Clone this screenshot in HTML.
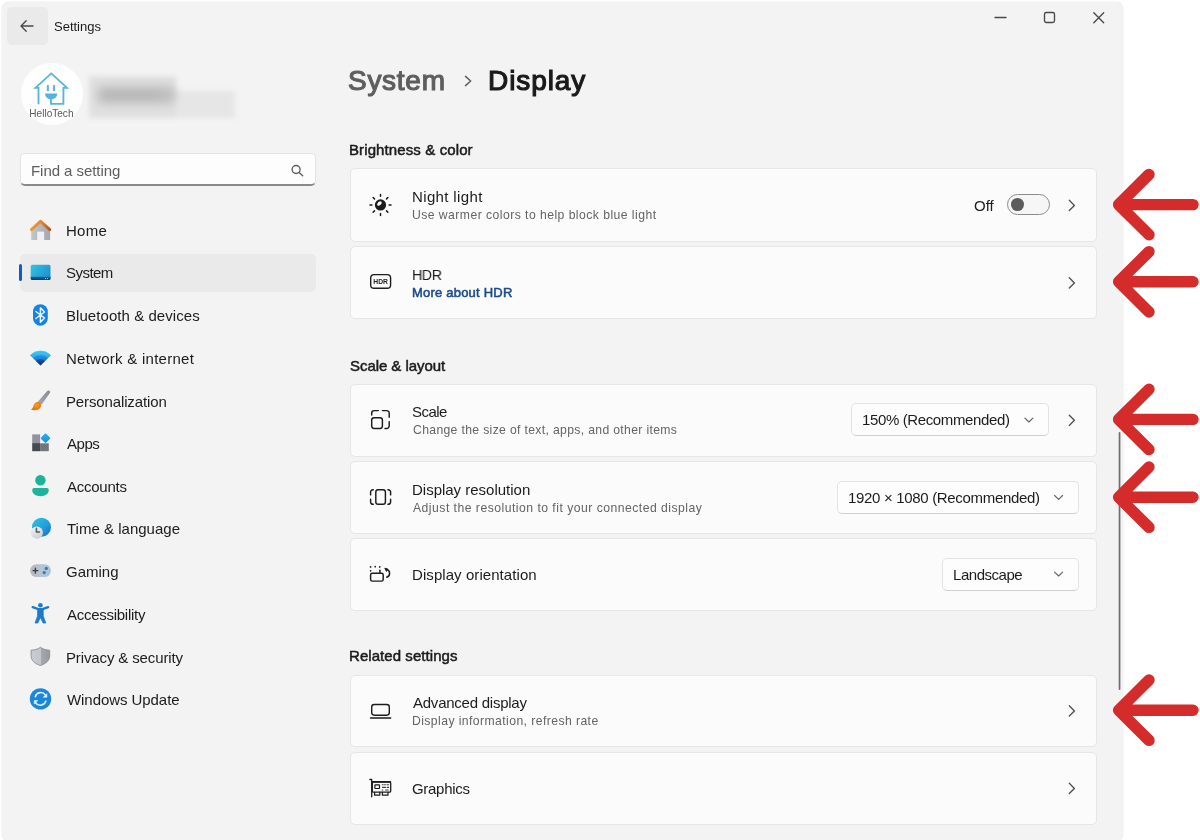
<!DOCTYPE html>
<html>
<head>
<meta charset="utf-8">
<title>Settings</title>
<style>
*{box-sizing:border-box;margin:0;padding:0}
html,body{width:1200px;height:840px;overflow:hidden;background:#fff}
body{font-family:"Liberation Sans",sans-serif;color:#1b1b1b;position:relative}
.win{position:absolute;left:2px;top:2px;width:1121px;height:838.5px;background:#f3f3f3;border-radius:7px;box-shadow:0 0 1.5px rgba(0,0,0,.16)}
.abs{position:absolute}
.t{position:absolute;white-space:nowrap;line-height:1;will-change:transform}
svg{will-change:transform}
.back{left:6.5px;top:7px;width:41px;height:37.5px;background:#eaeaea;border-radius:5px}
.search{left:20px;top:153px;width:296px;height:33px;background:#fdfdfd;border:1px solid #e3e3e3;border-bottom:2px solid #8a8a8a;border-radius:5px}
.sel{left:20px;top:254px;width:296px;height:38px;background:#eaeaea;border-radius:5px}
.selbar{left:19px;top:264px;width:3px;height:17px;background:#0f5fb8;border-radius:2px}
.nav{font-size:15px;left:66px;color:#1c1c1c}
.card{position:absolute;left:350px;width:747px;background:#fbfbfb;border:1px solid #e6e6e6;border-radius:5px}
.h{font-size:15px;left:349px;color:#1b1b1b;-webkit-text-stroke:0.5px #1b1b1b}
.ct{font-size:15px;left:413px;color:#1c1c1c}
.cs{font-size:12.2px;left:413px;color:#646464}
.dd{position:absolute;background:#fdfdfd;border:1px solid #e3e3e3;border-bottom-color:#cfcfcf;border-radius:5px;height:33px}
</style>
</head>
<body>
<div class="win"></div>

<!-- title bar -->
<div class="abs back"></div>
<div class="t" style="left:54px;top:20px;font-size:13px;letter-spacing:0.0px">Settings</div>

<!-- avatar -->
<div class="abs" style="left:20.8px;top:63.3px;width:62px;height:62px;border-radius:50%;background:#fefefe"></div>
<svg class="abs" style="left:0;top:0" width="260" height="140" viewBox="0 0 260 140" fill="none">
 <defs><filter id="bl" x="-20%" y="-40%" width="140%" height="180%"><feGaussianBlur stdDeviation="5"/></filter>
 <filter id="bl2" x="-20%" y="-40%" width="140%" height="180%"><feGaussianBlur stdDeviation="2.800"/></filter></defs>
 <g filter="url(#bl2)"><rect x="89" y="76" width="87" height="42" fill="#e0e0e0"/><rect x="176" y="91" width="59" height="27" fill="#e6e6e6"/></g>
 <g filter="url(#bl)">
  <rect x="97" y="86" width="78" height="18" rx="5" fill="#c0c0c0"/>
  <rect x="104" y="91" width="56" height="8" rx="4" fill="#b6b6b6"/>
 </g>
 <g stroke="#58b6da" stroke-width="1.850" stroke-linejoin="miter" stroke-linecap="butt">
  <path d="M38.500 104.300V87.800H35.500L51.300 73.400L67 87.800H63.400V103.800H50.900V99"/>
 </g>
 <path d="M45.100 93.400h12.100v.6a6 5.300 0 0 1-12.100 0z" fill="#52b4da"/>
 <rect x="46.800" y="85" width="2.100" height="5.900" rx=".5" fill="#5cb8db"/>
 <rect x="53" y="85" width="2.100" height="5.900" rx=".5" fill="#5cb8db"/>
 <text x="29.300" y="116.600" font-family="Liberation Sans, sans-serif" font-size="10.900" fill="#5a5a5e" textLength="44.200" lengthAdjust="spacingAndGlyphs">HelloTech</text>
</svg>

<!-- search -->
<div class="abs search"></div>
<div class="t" style="left:31px;top:163px;font-size:15px;color:#5d5d5d;letter-spacing:-0.05px">Find a setting</div>

<!-- nav -->
<div class="abs sel"></div>
<div class="abs selbar"></div>
<div class="t nav" style="top:223px;left:66px;letter-spacing:0.24px">Home</div>
<div class="t nav" style="top:265px;left:66px;letter-spacing:-0.54px">System</div>
<div class="t nav" style="top:308px;left:66px;letter-spacing:0.06px">Bluetooth &amp; devices</div>
<div class="t nav" style="top:351px;left:66px;letter-spacing:0.26px">Network &amp; internet</div>
<div class="t nav" style="top:394px;left:66px;letter-spacing:-0.13px">Personalization</div>
<div class="t nav" style="top:436px;left:67px;letter-spacing:-0.48px">Apps</div>
<div class="t nav" style="top:479px;left:67px;letter-spacing:-0.25px">Accounts</div>
<div class="t nav" style="top:521px;left:67px;letter-spacing:0.01px">Time &amp; language</div>
<div class="t nav" style="top:564px;left:66px;letter-spacing:0.0px">Gaming</div>
<div class="t nav" style="top:607px;left:67px;letter-spacing:-0.27px">Accessibility</div>
<div class="t nav" style="top:650px;left:66px;letter-spacing:-0.13px">Privacy &amp; security</div>
<div class="t nav" style="top:692px;left:67px;letter-spacing:-0.06px">Windows Update</div>


<!-- nav icons -->
<svg class="abs" style="left:0;top:0" width="340" height="840" viewBox="0 0 340 840" fill="none">
 <defs>
  <linearGradient id="gRoof" x1="31" y1="222" x2="50" y2="230" gradientUnits="userSpaceOnUse"><stop offset="0" stop-color="#f0a038"/><stop offset=".5" stop-color="#e0852a"/><stop offset="1" stop-color="#b8521c"/></linearGradient>
  <linearGradient id="gWall" x1="31" y1="0" x2="50" y2="0" gradientUnits="userSpaceOnUse"><stop offset="0" stop-color="#c3c7c9"/><stop offset="1" stop-color="#a3a8b2"/></linearGradient>
  <linearGradient id="gSys" x1="31" y1="265" x2="50" y2="279" gradientUnits="userSpaceOnUse"><stop offset="0" stop-color="#2fc6de"/><stop offset="1" stop-color="#1f8ad2"/></linearGradient>
  <linearGradient id="gSysB" x1="0" y1="276.5" x2="0" y2="280" gradientUnits="userSpaceOnUse"><stop offset="0" stop-color="#136a9c"/><stop offset="1" stop-color="#0a3f6c"/></linearGradient>
  <linearGradient id="gGlobe" x1="34" y1="519" x2="49" y2="536" gradientUnits="userSpaceOnUse"><stop offset="0" stop-color="#2cc0dc"/><stop offset=".55" stop-color="#239fdc"/><stop offset="1" stop-color="#1972cf"/></linearGradient>
  <linearGradient id="gClock" x1="33" y1="527" x2="40" y2="539" gradientUnits="userSpaceOnUse"><stop offset="0" stop-color="#f2f2f6"/><stop offset="1" stop-color="#c9ccd0"/></linearGradient>
  <linearGradient id="gBrush" x1="49" y1="391" x2="40" y2="403" gradientUnits="userSpaceOnUse"><stop offset="0" stop-color="#8a8f94"/><stop offset="1" stop-color="#9ea5ad"/></linearGradient>
  <radialGradient id="gTip" cx="36.5" cy="405" r="5.5" gradientUnits="userSpaceOnUse"><stop offset="0" stop-color="#ff9a1f"/><stop offset="1" stop-color="#d8760f"/></radialGradient>
  <linearGradient id="gShield" x1="31" y1="0" x2="50" y2="0" gradientUnits="userSpaceOnUse"><stop offset="0" stop-color="#c9ccd1"/><stop offset=".5" stop-color="#c2c5cb"/><stop offset=".52" stop-color="#a6a9af"/><stop offset="1" stop-color="#94979d"/></linearGradient>
  <linearGradient id="gPad" x1="30" y1="0" x2="51" y2="0" gradientUnits="userSpaceOnUse"><stop offset="0" stop-color="#b4b8c0"/><stop offset=".5" stop-color="#b9c3d2"/><stop offset="1" stop-color="#a5c4de"/></linearGradient>
  <linearGradient id="gWifi" x1="0" y1="351" x2="0" y2="365" gradientUnits="userSpaceOnUse"><stop offset="0" stop-color="#36c4f0"/><stop offset=".32" stop-color="#2fb4ee"/><stop offset=".36" stop-color="#2193e6"/><stop offset=".62" stop-color="#1c80e0"/><stop offset=".66" stop-color="#1257b4"/><stop offset="1" stop-color="#0b3478"/></linearGradient>
  <linearGradient id="gW1" x1="0" y1="351" x2="0" y2="357" gradientUnits="userSpaceOnUse"><stop offset="0" stop-color="#3ccaf4"/><stop offset="1" stop-color="#2aaeee"/></linearGradient><linearGradient id="gW2" x1="0" y1="355" x2="0" y2="360" gradientUnits="userSpaceOnUse"><stop offset="0" stop-color="#2598ea"/><stop offset="1" stop-color="#1a78dc"/></linearGradient><linearGradient id="gW3" x1="0" y1="359" x2="0" y2="365.3" gradientUnits="userSpaceOnUse"><stop offset="0" stop-color="#1455b4"/><stop offset="1" stop-color="#0a2f72"/></linearGradient>
  <linearGradient id="gDia" x1="41" y1="434" x2="50" y2="443" gradientUnits="userSpaceOnUse"><stop offset="0" stop-color="#28b4f2"/><stop offset="1" stop-color="#1a86e0"/></linearGradient>
 </defs>
 <!-- home -->
 <path d="M31.200 229.400L40.400 221.600L50.100 229.400V239.900H31.200Z" fill="url(#gWall)"/>
 <rect x="37.2" y="231.6" width="6.9" height="8.6" fill="#f1f1f3"/>
 <path d="M31.4 229.6L40.4 221.2L49.8 229.6" stroke="url(#gRoof)" stroke-width="2.9" stroke-linecap="round" stroke-linejoin="round"/>
 <!-- system -->
 <rect x="30.7" y="264.8" width="19.8" height="15.2" rx="1.6" fill="url(#gSys)"/>
 <path d="M30.7 276.8h19.8v1.6a1.6 1.6 0 0 1-1.6 1.6h-16.6a1.6 1.6 0 0 1-1.6-1.6z" fill="url(#gSysB)"/>
 <path d="M44.9 278.6h1.2M47 278.6h1" stroke="#9fd6ee" stroke-width=".9"/>
 <!-- bluetooth -->
 <rect x="33" y="304.2" width="14.8" height="21.5" rx="7.4" fill="#1583e4"/>
 <path d="M35.9 311.5l8.6 6.5-4.1 4.2v-14.3l4.1 4.1-8.6 6.5" stroke="#e8f6ff" stroke-width="1.5" stroke-linejoin="round" stroke-linecap="round"/>
 <!-- wifi -->
 <path d="M40.5 365.3L30.30 355.28A14.3 14.3 0 0 1 50.70 355.28Z" fill="url(#gW1)" stroke="#35bff0" stroke-width=".7" stroke-linejoin="round"/>
 <path d="M40.5 365.3L33.15 358.08A10.3 10.3 0 0 1 47.85 358.08Z" fill="url(#gW2)" />
 <path d="M40.5 365.3L36.08 360.95A6.2 6.2 0 0 1 44.92 360.95Z" fill="url(#gW3)" />
 <!-- personalization -->
 <path d="M48.800 390.600c1 .3 1.600 1.200 1.200 2.200L41.700 404.600l-3.600-3.200L47 391.300c.5-.6 1.100-.9 1.800-.7z" fill="url(#gBrush)"/>
 <path d="M38.400 401.700c2 .5 3.100 2.300 2.700 4.300-.6 2.800-3.200 4.300-6.200 4.300-1.800 0-3.200-.3-4.100-.8 1.400-.6 2.100-1.600 2.500-3.200.6-2.700 2.500-4.600 5.100-4.600z" fill="url(#gTip)"/>
 <!-- apps -->
 <rect x="32.200" y="434.400" width="7.900" height="8.700" fill="#8f93a0"/>
 <rect x="32.200" y="443.100" width="7.900" height="8.100" fill="#46494d"/>
 <rect x="40.100" y="443.300" width="8.700" height="7.900" fill="#72767c"/>
 <rect x="41.900" y="434.600" width="7.200" height="7.200" rx="1" transform="rotate(45 45.500 438.200)" fill="url(#gDia)"/>
 <!-- accounts -->
 <circle cx="40.400" cy="480.200" r="5.200" fill="#1bb299"/>
 <path d="M34.200 488.100h12.600a2 2 0 0 1 2 2c0 3.800-3.700 6.200-8.300 6.200s-8.300-2.400-8.300-6.200a2 2 0 0 1 2-2z" fill="#1cb49b"/>
 <!-- time & language -->
 <circle cx="41.500" cy="527.300" r="9.500" fill="url(#gGlobe)"/>
 <circle cx="36.800" cy="532.600" r="6.100" fill="url(#gClock)"/>
 <path d="M36.400 528.200v3.700h3" stroke="#55585c" stroke-width="1.500" stroke-linecap="round" stroke-linejoin="round"/>
 <!-- gaming -->
 <rect x="30.100" y="564.200" width="20.800" height="12.900" rx="6.400" fill="url(#gPad)"/>
 <path d="M33 570.600h4.800M35.400 568.200v4.800" stroke="#3c3e42" stroke-width="1.400" stroke-linecap="round"/>
 <circle cx="46.300" cy="568.400" r="1.600" fill="#2f7cbc"/>
 <circle cx="44.200" cy="572.600" r="1.600" fill="#2f7cbc"/>
 <!-- accessibility -->
 <circle cx="40.400" cy="605.300" r="2.300" fill="#1c7ccc"/>
 <path d="M32.700 607.200l5.600 1.900h4.200l5.600-1.900" stroke="#1c7ccc" stroke-width="2.400" stroke-linecap="round" stroke-linejoin="round"/>
 <path d="M37.600 608.600h5.600v7.400l2.600 7h-2.700l-2.700-5.400-2.700 5.400H35l2.600-7z" fill="#1c7ccc" stroke="#1c7ccc" stroke-width=".8" stroke-linejoin="round"/>
 <!-- privacy -->
 <path d="M40.400 647.300c2.600 1.900 5.600 2.700 9.300 2.900v5.400c0 5-3.600 8-9.300 9.900-5.700-1.900-9.300-4.900-9.300-9.900v-5.400c3.700-.2 6.700-1 9.300-2.900z" fill="url(#gShield)" stroke="#8a8d92" stroke-width=".9" stroke-linejoin="round"/>
 <!-- update -->
 <circle cx="40.500" cy="698.900" r="10.700" fill="#1b86da"/>
 <path d="M35.300 696.700a5.700 5.700 0 0 1 10.200-1.600" stroke="#d9f3ff" stroke-width="1.600" stroke-linecap="round"/>
 <path d="M46.900 693.700v3.600h-3.600z" fill="#d9f3ff" stroke="#d9f3ff" stroke-width=".6" stroke-linejoin="round"/>
 <path d="M45.800 701.100a5.700 5.700 0 0 1-10.200 1.600" stroke="#d9f3ff" stroke-width="1.600" stroke-linecap="round"/>
 <path d="M34.200 704.100v-3.600h3.600z" fill="#d9f3ff" stroke="#d9f3ff" stroke-width=".6" stroke-linejoin="round"/>
</svg>

<!-- heading -->
<div class="t" style="left:348px;top:67px;font-size:28px;color:#5e5e5e;-webkit-text-stroke:1.15px #5e5e5e;letter-spacing:0.72px">System</div>
<div class="t" style="left:488px;top:67px;font-size:28px;color:#1a1a1a;-webkit-text-stroke:1.15px #1a1a1a;letter-spacing:0.92px">Display</div>

<!-- sections -->
<div class="t h" style="top:142px;left:349px;letter-spacing:0.11px">Brightness &amp; color</div>
<div class="card" style="top:168px;height:74px"></div>
<div class="card" style="top:246px;height:73px"></div>
<div class="t ct" style="top:189px;left:412px;letter-spacing:0.36px">Night light</div>
<div class="t cs" style="top:209px;left:412px;letter-spacing:0.45px">Use warmer colors to help block blue light</div>
<div class="t ct" style="top:267px;left:412px;letter-spacing:-0.5px;transform:scaleX(.95);transform-origin:0 0">HDR</div>
<div class="t cs" style="top:286px;color:#1a4c8b;font-size:13px;-webkit-text-stroke:0.55px #1a4c8b;left:412px;letter-spacing:0.21px">More about HDR</div>

<div class="t h" style="top:358px;left:350px;letter-spacing:-0.06px">Scale &amp; layout</div>
<div class="card" style="top:384px;height:73px"></div>
<div class="card" style="top:461px;height:73px"></div>
<div class="card" style="top:538px;height:73px"></div>
<div class="t ct" style="top:404px;left:412px;letter-spacing:-0.55px">Scale</div>
<div class="t cs" style="top:424px;left:413px;letter-spacing:0.34px">Change the size of text, apps, and other items</div>
<div class="t ct" style="top:482px;left:412px;letter-spacing:-0.01px">Display resolution</div>
<div class="t cs" style="top:502px;left:413px;letter-spacing:0.48px">Adjust the resolution to fit your connected display</div>
<div class="t ct" style="top:567px;left:412px;letter-spacing:0.07px">Display orientation</div>

<div class="t h" style="top:648px;left:349px;letter-spacing:0.06px">Related settings</div>
<div class="card" style="top:675px;height:72px"></div>
<div class="card" style="top:752px;height:73px"></div>
<div class="t ct" style="top:695px;left:413px;letter-spacing:-0.24px">Advanced display</div>
<div class="t cs" style="top:715px;left:412px;letter-spacing:0.42px">Display information, refresh rate</div>
<div class="t ct" style="top:781px;left:412px;letter-spacing:-0.3px">Graphics</div>



<!-- card icons -->
<svg class="abs" style="left:0;top:0" width="1200" height="840" viewBox="0 0 1200 840" fill="none">
 <g stroke="#1c1c1c" stroke-width="1.45" stroke-linecap="round" stroke-linejoin="round">
  <!-- night light -->
  <circle cx="380.5" cy="204.9" r="4.9" fill="#1c1c1c"/>
  <ellipse cx="379.4" cy="203.5" rx="2.7" ry="1.7" transform="rotate(-42 379.4 203.5)" fill="#fbfbfb" stroke="none"/>
  <path d="M380.5 194.4v1.9M380.5 213.5v1.9M370 204.9h1.9M389.1 204.9h1.9M373.1 197.5l1.4 1.4M386.5 210.9l1.4 1.4M387.9 197.5l-1.4 1.4M374.5 210.9l-1.4 1.4" stroke-width="1.5"/>
  <!-- HDR -->
  <rect x="370.7" y="274.6" width="19.9" height="13.7" rx="3.4" stroke-width="1.4"/>
  <!-- scale -->
  <path d="M371.7 415v-1.8a2.6 2.6 0 0 1 2.6-2.6h4M382.4 410.6h4.2a2.6 2.6 0 0 1 2.6 2.6v4M389.2 421.6v4.2a2.6 2.6 0 0 1-2.6 2.6h-1.6"/>
  <rect x="371.7" y="417.7" width="10.7" height="10.7" rx="2.4"/>
  <!-- display resolution -->
  <rect x="375.8" y="489.8" width="9.6" height="14.5" rx="2.3"/>
  <path d="M373.3 489.8h-.4a2.3 2.3 0 0 0-2.3 2.3v2.8M370.6 499.2v2.8a2.3 2.3 0 0 0 2.3 2.3h.4M387.9 489.8h.4a2.3 2.3 0 0 1 2.3 2.3v2.8M390.6 499.2v2.8a2.3 2.3 0 0 1-2.3 2.3h-.4"/>
  <!-- display orientation -->
  <rect x="370.6" y="573.3" width="12.6" height="7.8" rx="1.7"/>
  <path d="M370.6 566.9h0M375.2 566.7h0M379.7 566.9h0M370.6 570.8h0" stroke-width="1.7"/>
  <path d="M379.9 570.2v2.6"/>
  <path d="M386.6 569.3a4.2 4.2 0 0 1 .2 8"/>
  <path d="M385.2 568.3l2.3.6-.9 2.2z" fill="#1c1c1c" stroke-width="1"/>
  <!-- advanced display -->
  <rect x="371.7" y="704.5" width="17.6" height="10.7" rx="2.6" stroke-width="1.4"/>
  <path d="M370.5 718h20.2" stroke-width="1.4"/>
  <!-- graphics -->
  <path d="M369.9 779.5h1.8v17.3" stroke-width="1.3"/>
  <rect x="372.3" y="781.8" width="18.4" height="10.3" rx="1.2" stroke-width="1.3"/>
  <path d="M372.3 781.9h18" stroke-width="1.7"/>
  <rect x="374.9" y="784.8" width="4.6" height="3.7" rx=".5" stroke-width="1.2"/>
  <path d="M382.2 784.8h1M384.6 784.8h1M387.1 784.8h1.5M382.6 787.4h2.8M387.2 787.4h1.4M382.2 790h.6M385.6 790h2.6" stroke-width="1.1" stroke="#3a3a3a"/>
  <path d="M374.6 792.4v2.8h5.2v-2.8M382.4 792.4v2.8h5.6v-2.8" stroke-width="1.2"/>
 </g>
 <text x="380.6" y="284.3" font-family="Liberation Sans, sans-serif" font-weight="bold" font-size="7.4" fill="#1c1c1c" text-anchor="middle" textLength="14.6" lengthAdjust="spacingAndGlyphs">HDR</text>
</svg>

<!-- right-side controls -->
<div class="t" style="left:974px;top:198px;font-size:15px;color:#1c1c1c;letter-spacing:0.0px">Off</div>
<div class="abs" style="left:1007px;top:194px;width:43px;height:21px;border:1.4px solid #8b8b8b;border-radius:11px;background:#f6f6f6"></div>
<div class="abs" style="left:1010.9px;top:198.200px;width:12.800px;height:12.800px;border-radius:50%;background:#5c5c5c"></div>

<div class="dd" style="left:851px;top:403px;width:198px"></div>
<div class="t" style="left:862px;top:412px;font-size:15px;color:#1c1c1c;letter-spacing:-0.37px">150% (Recommended)</div>
<div class="dd" style="left:837px;top:481px;width:242px"></div>
<div class="t" style="left:848px;top:490px;font-size:15px;color:#1c1c1c;letter-spacing:-0.32px">1920 × 1080 (Recommended)</div>
<div class="dd" style="left:942px;top:558px;width:137px"></div>
<div class="t" style="left:953px;top:567px;font-size:15px;color:#1c1c1c;letter-spacing:-0.46px">Landscape</div>

<!-- overlay svg: chevrons, window controls, scrollbar, arrows -->
<svg class="abs" style="left:0;top:0" width="1200" height="840" viewBox="0 0 1200 840" fill="none">
  <g stroke="#484848" stroke-width="1.35" stroke-linecap="round" stroke-linejoin="round">
    <!-- back arrow -->
    <path d="M33 26H21.2M26.2 20.8L21 26l5.2 5.2"/>
    <!-- window controls -->
    <path d="M995 17.5h11"/>
    <rect x="1044.5" y="12.5" width="10" height="10" rx="1.8"/>
    <path d="M1093.800 12.800l9.900 9.900M1103.700 12.800l-9.900 9.900"/>
    <!-- breadcrumb chevron -->
    <path d="M465.5 76.4l5.2 4.6-5.200 4.600" stroke="#5e5e5e" stroke-width="1.500"/>
    <!-- search -->
    <circle cx="296.1" cy="169.5" r="4" stroke="#5a5a5a"/>
    <path d="M299.100 172.500l3.600 3.300" stroke="#5a5a5a"/>
  </g>
  <g stroke="#505050" stroke-width="1.35" stroke-linecap="round" stroke-linejoin="round">
    <!-- right chevrons -->
    <path d="M1069.300 200.3l5.100 5.100-5.100 5.100"/>
    <path d="M1069.300 277.8l5.100 5.100-5.100 5.100"/>
    <path d="M1069.300 415.2l5.100 5.100-5.100 5.100"/>
    <path d="M1069.300 705.8l5.100 5.100-5.100 5.100"/>
    <path d="M1069.300 783.3l5.100 5.100-5.100 5.100"/>
    <!-- dropdown chevrons -->
    <path d="M1024.9 418.1l4 3.900 4-3.900" stroke="#666" stroke-width="1.150"/>
    <path d="M1054.6 495.5l4 3.900 4-3.900" stroke="#666" stroke-width="1.150"/>
    <path d="M1054.6 572.1l4 3.900 4-3.900" stroke="#666" stroke-width="1.150"/>
  </g>
  <!-- scrollbar -->
  <rect x="1118.7" y="432" width="1.7" height="258" rx="0.8" fill="#6e6e6e"/>
  <!-- red arrows -->
  <g stroke="#d42b2b" stroke-width="11.4" stroke-linecap="round" stroke-linejoin="round">
    <path d="M1149 174.4L1118.6 204.6L1149 234.8M1118.6 204.6H1193"/>
    <path d="M1149 251.6L1118.6 281.8L1149 312M1118.6 281.8H1193"/>
    <path d="M1149 389.2L1118.6 419.4L1149 449.6M1118.6 419.4H1193"/>
    <path d="M1149 467L1118.6 497.2L1149 527.4M1118.6 497.2H1193"/>
    <path d="M1149 680L1118.6 710.2L1149 740.4M1118.6 710.2H1193"/>
  </g>
</svg>
</body>
</html>
